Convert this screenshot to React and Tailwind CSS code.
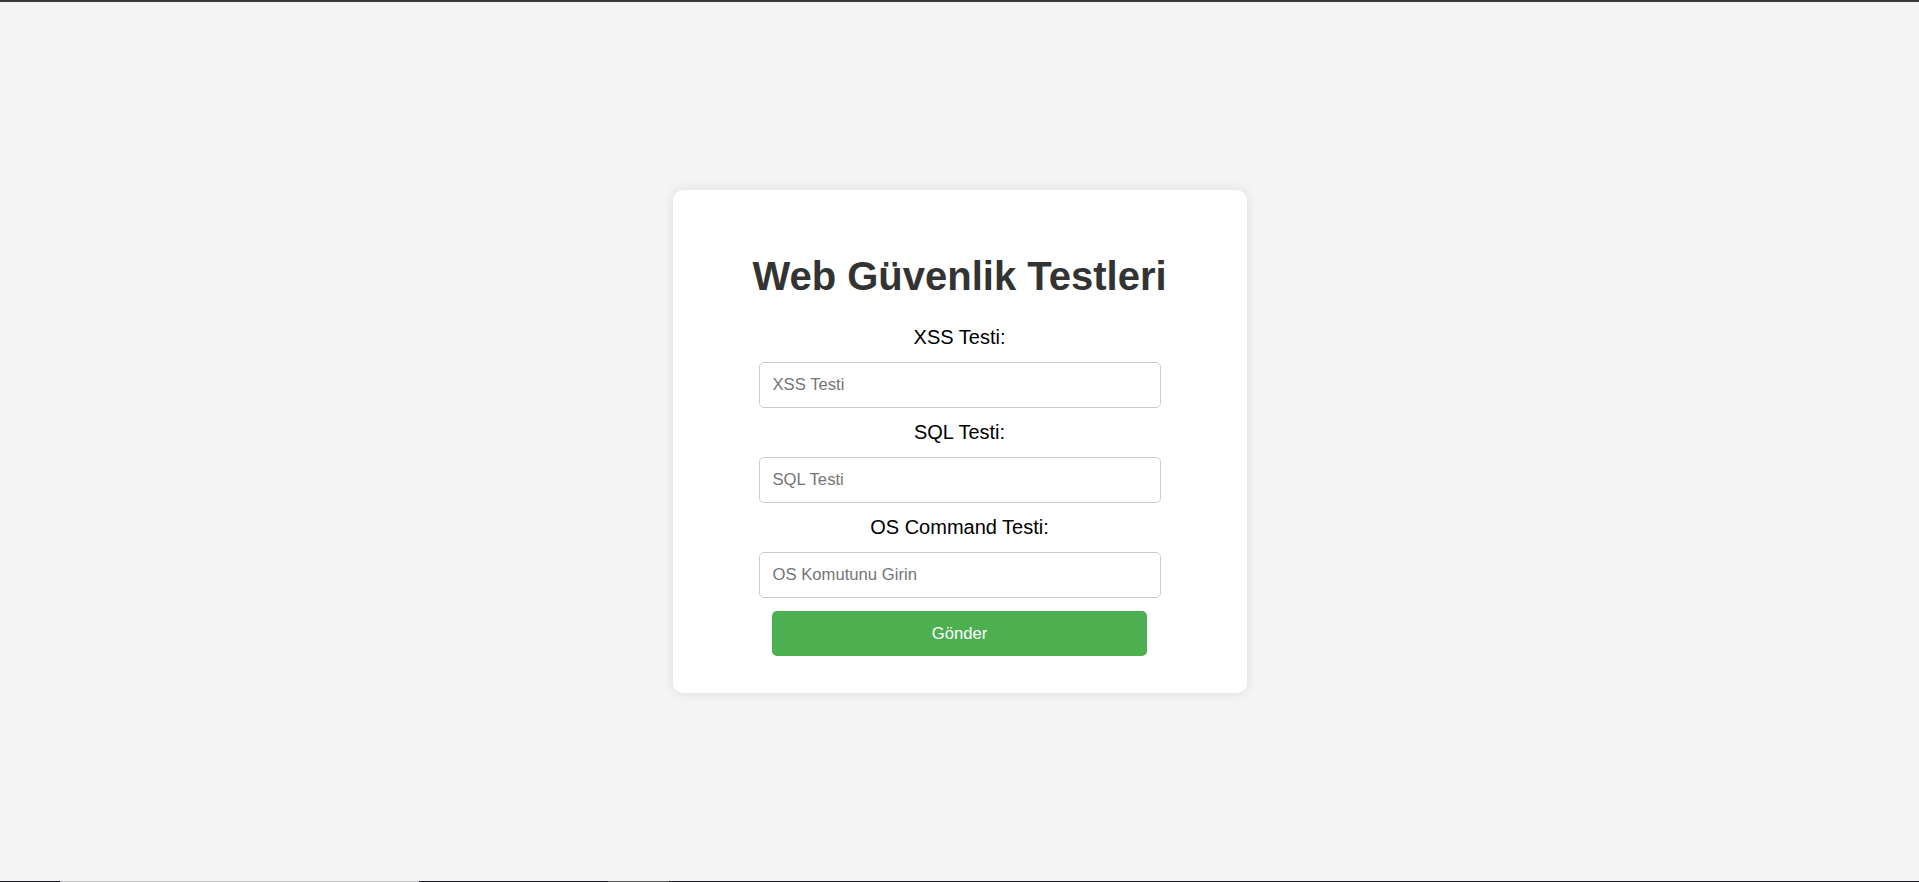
import React, { useState } from 'react';

const fields = [
  { key: 'xss', label: 'XSS Testi:', placeholder: 'XSS Testi' },
  { key: 'sql', label: 'SQL Testi:', placeholder: 'SQL Testi' },
  { key: 'os', label: 'OS Command Testi:', placeholder: 'OS Komutunu Girin' },
];

function App() {
  const [values, setValues] = useState({ xss: '', sql: '', os: '' });

  const update = (key, value) => setValues((prev) => ({ ...prev, [key]: value }));

  return (
    <div className="h-[882px] flex flex-col bg-[#f4f4f4] font-['Liberation_Sans',Arial,sans-serif]">
      <div className="h-[2px] bg-[#3a3a3a]" />
      <div className="flex-1 flex items-center justify-center">
        <form
          className="w-[574px] bg-white rounded-[10px] shadow-[0_0_12px_rgba(0,0,0,0.1)] pt-[63px] pb-[37px] flex flex-col items-center"
          onSubmit={(e) => e.preventDefault()}
        >
          <h1 className="text-[40px] leading-[46px] font-bold text-[#333333] mb-[27px]">
            Web Güvenlik Testleri
          </h1>
          {fields.map((f) => (
            <div key={f.key} className="flex flex-col items-center">
              <label htmlFor={f.key} className="text-[20px] leading-[23px] text-black mb-[13px]">
                {f.label}
              </label>
              <input
                id={f.key}
                className="w-[402px] h-[46px] px-[13px] border border-[#cccccc] rounded-[5px] text-[16.67px] text-black placeholder:text-[#757575] outline-none mb-[13px]"
                placeholder={f.placeholder}
                value={values[f.key]}
                onChange={(e) => update(f.key, e.target.value)}
              />
            </div>
          ))}
          <button
            type="submit"
            className="w-[375px] h-[45px] bg-[#4caf50] text-white text-[16.67px] rounded-[5px] cursor-pointer"
          >
            Gönder
          </button>
        </form>
      </div>
      <div className="h-px flex bg-[#1c1c22]">
        <div className="w-[60px]" />
        <div className="w-[359px] bg-[#c4c4c4]" />
        <div className="w-[189px]" />
        <div className="w-[61px] bg-[#5a5a5a]" />
      </div>
    </div>
  );
}

export default App;
